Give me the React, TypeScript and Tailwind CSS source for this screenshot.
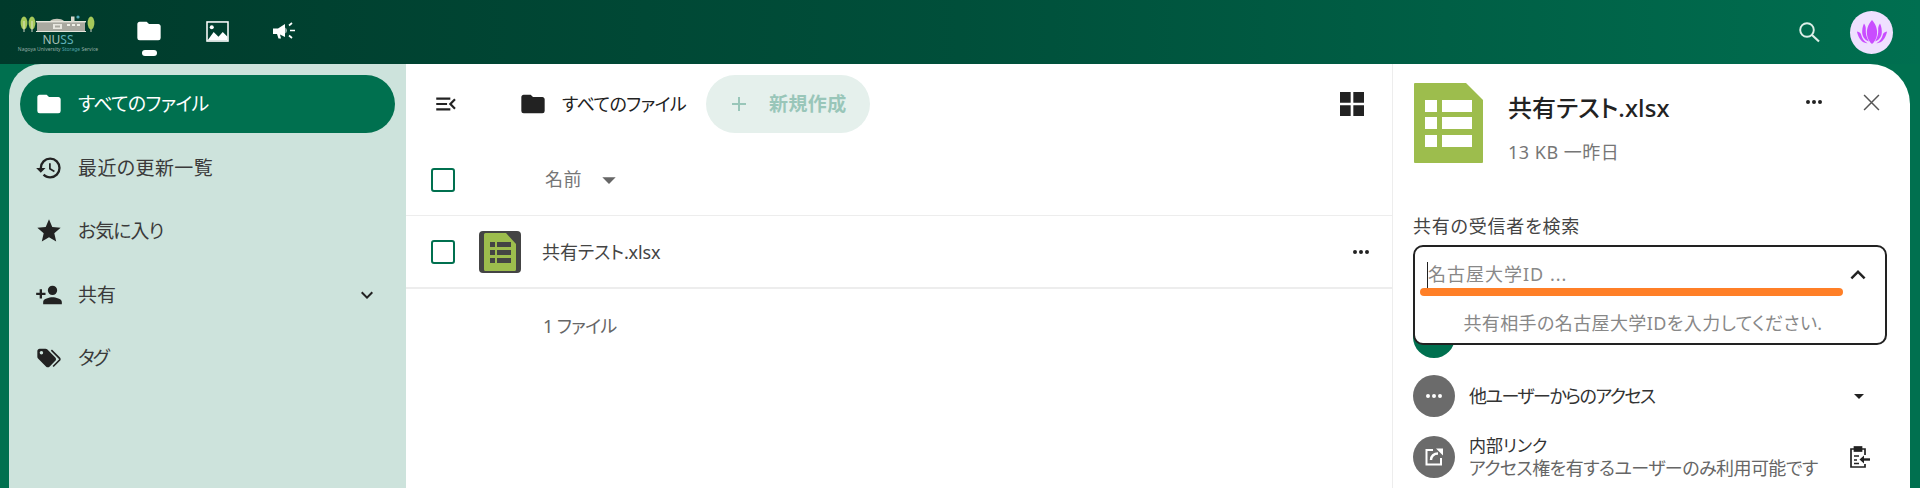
const jp = "font-['Noto_Sans','Noto_Sans_CJK_JP',sans-serif] [font-feature-settings:'palt']";

function Mdi({ d, className }: { d: string; className?: string }) {
  return (
    <svg viewBox="0 0 24 24" fill="currentColor" className={className}>
      <path d={d} />
    </svg>
  );
}

const folderPath = 'M10,4H4C2.89,4 2,4.89 2,6V18A2,2 0 0,0 4,20H20A2,2 0 0,0 22,18V8C22,6.89 21.1,6 20,6H12L10,4Z';
const dotsPath = 'M16,12A2,2 0 0,1 18,10A2,2 0 0,1 20,12A2,2 0 0,1 18,14A2,2 0 0,1 16,12M10,12A2,2 0 0,1 12,10A2,2 0 0,1 14,12A2,2 0 0,1 12,14A2,2 0 0,1 10,12M4,12A2,2 0 0,1 6,10A2,2 0 0,1 8,12A2,2 0 0,1 6,14A2,2 0 0,1 4,12Z';
const chevronDown = 'M7.41,8.58L12,13.17L16.59,8.58L18,10L12,16L6,10L7.41,8.58Z';
const chevronUp = 'M7.41,15.41L12,10.83L16.59,15.41L18,14L12,8L6,14L7.41,15.41Z';
const menuDown = 'M7,10L12,15L17,10H7Z';

const navItems = [
  {
    label: '最近の更新一覧',
    track: 'tracking-[0.4px]',
    d: 'M13.5,8H12V13L16.28,15.54L17,14.33L13.5,12.25V8M13,3A9,9 0 0,0 4,12H1L4.96,16.03L9,12H6A7,7 0 0,1 13,5A7,7 0 0,1 20,12A7,7 0 0,1 13,19C11.07,19 9.32,18.21 8.06,16.94L6.64,18.36C8.27,20 10.5,21 13,21A9,9 0 0,0 22,12A9,9 0 0,0 13,3',
  },
  {
    label: 'お気に入り',
    track: 'tracking-[-1px]',
    d: 'M12,17.27L18.18,21L16.54,13.97L22,9.24L14.81,8.62L12,2L9.19,8.62L2,9.24L7.45,13.97L5.82,21L12,17.27Z',
  },
  {
    label: '共有',
    track: 'tracking-[0px]',
    chevron: true,
    d: 'M15,14C12.33,14 7,15.33 7,18V20H23V18C23,15.33 17.67,14 15,14M6,10V7H4V10H1V12H4V15H6V12H9V10M15,12A4,4 0 0,0 19,8A4,4 0 0,0 15,4A4,4 0 0,0 11,8A4,4 0 0,0 15,12Z',
  },
  {
    label: 'タグ',
    track: 'tracking-[-2px]',
    d: 'M5.5,9A1.5,1.5 0 0,0 7,7.5A1.5,1.5 0 0,0 5.5,6A1.5,1.5 0 0,0 4,7.5A1.5,1.5 0 0,0 5.5,9M17.41,11.58C17.77,11.94 18,12.44 18,13C18,13.55 17.78,14.05 17.41,14.41L12.41,19.41C12.05,19.77 11.55,20 11,20C10.45,20 9.95,19.78 9.58,19.41L2.59,12.42C2.22,12.05 2,11.55 2,11V6C2,4.89 2.89,4 4,4H9C9.55,4 10.05,4.22 10.41,4.58L17.41,11.58M13.54,5.71L14.54,4.71L21.41,11.58C21.78,11.94 22,12.45 22,13C22,13.55 21.78,14.05 21.42,14.41L16.04,19.79L15.04,18.79L20.75,13L13.54,5.71Z',
  },
];

function Logo() {
  return (
    <div className="flex w-[84px] flex-col items-center">
      <svg viewBox="0 0 76 18" className="h-[18px] w-[76px]">
        <ellipse cx="4" cy="8" rx="3.4" ry="6.5" fill="#a5c95a" />
        <ellipse cx="12" cy="8" rx="3.4" ry="6.5" fill="#a5c95a" />
        <path d="M4 6V17M12 6V17M71 6V17" stroke="#e8e8d8" strokeWidth="0.9" />
        <ellipse cx="71" cy="8" rx="3.4" ry="6.5" fill="#a5c95a" />
        <rect x="17" y="7" width="48" height="9" fill="#a9a9a0" />
        <rect x="16" y="6" width="50" height="1.4" fill="#e6e6dc" />
        <rect x="16" y="16" width="50" height="1" fill="#e6e6dc" />
        <path d="M30 6C33 3 41 3 44 6Z" fill="#c8c8bc" />
        <rect x="33" y="9" width="9" height="5" fill="#e8e8e0" />
        <rect x="35" y="10.5" width="5" height="2" fill="#a9a9a0" />
        <rect x="47" y="9" width="3" height="2" fill="#f0f0e8" />
        <rect x="52" y="9" width="3" height="2" fill="#f0f0e8" />
        <rect x="57" y="9" width="3" height="2" fill="#f0f0e8" />
        <rect x="51" y="1.5" width="3.5" height="5" fill="#d8d8cc" />
        <circle cx="58" cy="2" r="1.6" fill="#4fa8b8" />
      </svg>
      <div className="mt-[1px] font-['Noto_Sans',sans-serif] text-[12px] leading-[12px] text-[#a8c0b8]">
        NU<span className="text-[#5fb0b8]">SS</span>
      </div>
      <div className="font-['Noto_Sans',sans-serif] text-[5px] leading-[7px] whitespace-nowrap text-[#94aca4]">
        Nagoya University <span className="text-[#4fa0a8]">Storage</span> Service
      </div>
    </div>
  );
}

function TopBar() {
  return (
    <header className="flex h-16 shrink-0 items-center bg-gradient-to-r from-[#003a2b] via-[#004f3a] to-[#006f50] text-white">
      <div className="ml-[16px] mt-[3px]">
        <Logo />
      </div>
      <div className="ml-[35px] flex h-full w-[28px] flex-col items-center pt-[17px]">
        <Mdi d={folderPath} className="h-[28px] w-[28px]" />
        <div className="mt-[5px] h-[6px] w-[15px] rounded-full bg-white" />
      </div>
      <svg viewBox="0 0 24 22" className="ml-[43px] mb-[2px] h-[21px] w-[23px]">
        <rect x="1" y="1" width="22" height="20" fill="none" stroke="white" strokeWidth="1.6" />
        <path d="M1.5 20.5L8 11.5L13 16.5L17.5 11.5L22.5 16.5V20.5Z" fill="white" />
        <circle cx="6" cy="6.5" r="2.1" fill="white" />
      </svg>
      <svg viewBox="0 0 24 20" className="ml-[43px] mb-[2px] h-[20px] w-[24px]">
        <path d="M1 7.5H6L13 3V16L8 13.5L9 17.5H6.5L5 13H1Z" fill="white" />
        <path d="M13.5 6.5C15 8 15 11 13.5 12.5Z" fill="white" />
        <path d="M17 4.5L20 2M18 9.5H23M17 14.5L20 17" stroke="white" strokeWidth="1.7" fill="none" />
      </svg>
      <div className="ml-auto flex items-center">
        <svg viewBox="0 0 22 22" className="mr-[30px] h-[22px] w-[22px] text-[#dcefe8]" fill="none" stroke="currentColor">
          <circle cx="9" cy="9" r="6.8" strokeWidth="1.9" />
          <path d="M14 14L21 20.5" strokeWidth="2.2" />
        </svg>
        <div className="mr-[27px] flex h-[43px] w-[43px] items-center justify-center rounded-full bg-[#efe0ff]">
          <svg viewBox="0 0 36 28" className="h-[25px] w-[32px]" fill="#c94dff">
            <path d="M18 0C22.5 5 24.5 11 23.5 17C23 21 20.5 25 18 27C15.5 25 13 21 12.5 17C11.5 11 13.5 5 18 0Z" />
            <path d="M9 4C11 7 11.2 9 11 11C10.7 15 11.8 20 14.5 24C9.5 22.5 6.5 18 7 12C7.2 9 8 6 9 4Z" />
            <path d="M27 4C25 7 24.8 9 25 11C25.3 15 24.2 20 21.5 24C26.5 22.5 29.5 18 29 12C28.8 9 28 6 27 4Z" />
            <path d="M1 13C4 13.5 5.5 15 6 17C7 21 9.5 24 13 26C7 26.5 3 21 1 13Z" />
            <path d="M35 13C32 13.5 30.5 15 30 17C29 21 26.5 24 23 26C29 26.5 33 21 35 13Z" />
          </svg>
        </div>
      </div>
    </header>
  );
}

function Sidebar() {
  return (
    <aside className={`${jp} flex w-[397px] shrink-0 flex-col gap-[5.5px] rounded-tl-[32px] bg-[#cde3dc] px-[11px] pt-[11px]`}>
      <div className="flex h-[58px] items-center rounded-full bg-[#00704f] pl-[15px] text-white">
        <Mdi d={folderPath} className="h-[28px] w-[28px]" />
        <span className="ml-[15px] text-[19px] tracking-[-0.7px]">すべてのファイル</span>
      </div>
      {navItems.map((item) => (
        <div key={item.label} className="flex h-[58px] items-center pl-[15px] text-[#222]">
          <Mdi d={item.d} className="h-[28px] w-[28px]" />
          <span className={`ml-[15px] mt-[1px] text-[19px] ${item.track} text-[#3a3a3a]`}>{item.label}</span>
          {item.chevron && <Mdi d={chevronDown} className="ml-auto mr-[16px] h-[24px] w-[24px]" />}
        </div>
      ))}
    </aside>
  );
}

function Checkbox() {
  return <div className="h-[24px] w-[24px] rounded-[3px] border-[2.5px] border-[#00704f]" />;
}

function SheetSmall() {
  return (
    <div className="flex h-[42px] w-[42px] items-center justify-center rounded-[4px] bg-[#444]">
      <svg viewBox="0 0 32 38" className="h-[38px] w-[32px]">
        <path d="M0 1.5A1.5 1.5 0 0 1 1.5 0H22L32 11V36.5A1.5 1.5 0 0 1 30.5 38H1.5A1.5 1.5 0 0 1 0 36.5Z" fill="#9dbd4d" />
        <g fill="#444">
          <rect x="6" y="9" width="5" height="5" />
          <rect x="13" y="9" width="14" height="5" />
          <rect x="6" y="17" width="5" height="5" />
          <rect x="13" y="17" width="14" height="5" />
          <rect x="6" y="25" width="5" height="5" />
          <rect x="13" y="25" width="14" height="5" />
        </g>
      </svg>
    </div>
  );
}

function FileList() {
  return (
    <main className={`${jp} min-w-0 flex-1 bg-white`}>
      <div className="flex h-[80px] items-center">
        <Mdi d="M21,15.61L19.59,17L14.58,12L19.59,7L21,8.39L17.44,12L21,15.61M3,6H16V8H3V6M3,13V11H13V13H3M3,18V16H16V18H3Z" className="ml-[27px] h-[26px] w-[26px] text-[#222]" />
        <Mdi d={folderPath} className="ml-[60px] h-[28px] w-[28px] text-[#222]" />
        <span className="w-[141px] shrink-0 pl-[15px] text-[18px] tracking-[-0.6px] text-[#222]">すべてのファイル</span>
        <div className="ml-[18px] flex h-[58px] w-[164px] items-center rounded-full bg-[#e5f0ec] pl-[21px] text-[#99c6b9]">
          <Mdi d="M19,13H13V19H11V13H5V11H11V5H13V11H19V13Z" className="h-[24px] w-[24px]" />
          <span className="ml-[18px] text-[19px] font-bold tracking-[0.4px]">新規作成</span>
        </div>
        <Mdi d="M3,11H11V3H3M3,21H11V13H3M13,21H21V13H13M13,3V11H21V3" className="ml-auto mr-[24px] h-[32px] w-[32px] text-[#222]" />
      </div>
      <div className="flex h-[72px] items-center border-b border-[#ededed]">
        <div className="ml-[25px]"><Checkbox /></div>
        <span className="ml-[90px] text-[18px] tracking-[0.5px] text-[#767676]">名前</span>
        <Mdi d={menuDown} className="ml-[11px] h-[32px] w-[32px] text-[#666]" />
      </div>
      <div className="flex h-[73px] items-center border-b-2 border-[#ededed]">
        <div className="ml-[25px]"><Checkbox /></div>
        <div className="ml-[24px]"><SheetSmall /></div>
        <span className="ml-[21px] mt-[2px] text-[18px] tracking-[-0.1px] text-[#444]">共有テスト.xlsx</span>
        <Mdi d={dotsPath} className="ml-auto mr-[19px] h-[24px] w-[24px] text-[#222]" />
      </div>
      <div className="ml-[137px] mt-[24px] text-[18px] tracking-[-0.6px] text-[#666]">1 ファイル</div>
    </main>
  );
}

function DetailRow({ color, icon, children, right }: { color: string; icon?: React.ReactNode; children?: React.ReactNode; right?: React.ReactNode }) {
  return (
    <div className="flex items-center">
      <div className={`flex h-[42px] w-[42px] shrink-0 items-center justify-center rounded-full ${color} text-white`}>{icon}</div>
      <div className="ml-[14px] min-w-0 flex-1">{children}</div>
      {right}
    </div>
  );
}

function Details() {
  return (
    <section className={`${jp} relative flex w-[518px] shrink-0 flex-col rounded-tr-[40px] border-l border-[#ededed] bg-white pl-[20px] pr-[22px] text-[#222]`}>
      <div className="flex pt-[19px]">
        <svg viewBox="0 0 69 80" className="ml-[1px] h-[80px] w-[69px] shrink-0">
          <path d="M0 1A1 1 0 0 1 1 0H52L69 17V79A1 1 0 0 1 68 80H1A1 1 0 0 1 0 79Z" fill="#9dbd4d" />
          <g fill="white">
            <rect x="11" y="17" width="12" height="12" />
            <rect x="28" y="17" width="30" height="12" />
            <rect x="11" y="34" width="12" height="12" />
            <rect x="28" y="34" width="30" height="12" />
            <rect x="11" y="52" width="12" height="12" />
            <rect x="28" y="52" width="30" height="12" />
          </g>
        </svg>
        <div className="ml-[25px] flex-1">
          <div className="mt-[9px] text-[24px] leading-[32px] font-medium tracking-[0.1px]">共有テスト.xlsx</div>
          <div className="mt-[16px] text-[18px] leading-[24px] tracking-[0.5px] text-[#767676]">13 KB 一昨日</div>
        </div>
        <Mdi d={dotsPath} className="mr-[37px] mt-[7px] h-[24px] w-[24px] text-[#222]" />
        <svg viewBox="0 0 16 16" className="mr-[8px] mt-[11px] h-[17px] w-[17px] text-[#555]" fill="none" stroke="currentColor" strokeWidth="1.4">
          <path d="M1 1L15 15M15 1L1 15" />
        </svg>
      </div>
      <div className="mt-[50px] text-[18px] leading-[24px] tracking-[0.8px] text-[#444]">共有の受信者を検索</div>
      <div className="mt-[78px] flex flex-col gap-[17px]">
        <DetailRow color="bg-[#00704f]" />
        <DetailRow
          color="bg-[#6b6b6b]"
          icon={<Mdi d={dotsPath} className="h-[24px] w-[24px]" />}
          right={<Mdi d={menuDown} className="mr-[17px] h-[24px] w-[24px] text-[#222]" />}
        >
          <span className="text-[18px] tracking-[-1.5px] text-[#333]">他ユーザーからのアクセス</span>
        </DetailRow>
        <DetailRow
          color="bg-[#6b6b6b]"
          icon={
            <svg viewBox="0 0 24 24" className="h-[24px] w-[24px]" fill="none" stroke="white" strokeWidth="2">
              <path d="M11 5H4.5V19.5H19V13" />
              <path d="M9 15C9 11 12 8.5 16 8.5" strokeWidth="2.4" />
              <path d="M14 3.5H21V10.5Z" fill="white" stroke="none" />
            </svg>
          }
          right={
            <svg viewBox="0 0 24 24" className="mr-[17px] h-[24px] w-[24px] text-[#222]" fill="none" stroke="currentColor" strokeWidth="1.7">
              <path d="M7.5 4H4V22H18V19" />
              <path d="M14.5 4H18V10" />
              <rect x="7.5" y="2" width="7" height="4" fill="currentColor" />
              <path d="M7 11H12M7 15H10M7 18.5H12" strokeWidth="1.4" />
              <path d="M23 14.5H14" strokeWidth="2.4" />
              <path d="M17 10.5L12.5 14.5L17 18.5Z" fill="currentColor" stroke="none" />
            </svg>
          }
        >
          <div className="text-[17px] leading-[23px] text-[#333]">内部リンク</div>
          <div className="text-[18px] leading-[23px] tracking-[-0.55px] whitespace-nowrap text-[#666]">アクセス権を有するユーザーのみ利用可能です</div>
        </DetailRow>
      </div>

      {/* 受信者検索のドロップダウン */}
      <div className="absolute left-[20px] top-[181px] h-[100px] w-[474px] rounded-[10px] border-2 border-[#222] bg-white">
        <div className="flex h-[55px] items-center pl-[12px] pr-[12px]">
          <div className="h-[26px] w-px bg-[#222]" />
          <span className="text-[18px] tracking-[1px] text-[#888]">名古屋大学ID ...</span>
          <Mdi d={chevronUp} className="ml-auto h-[30px] w-[30px] text-[#222]" />
        </div>
        <div className="mt-[6px] pr-[14px] text-center text-[18px] leading-[30px] tracking-[0.4px] text-[#888]">共有相手の名古屋大学IDを入力してください.</div>
        <div className="absolute left-[5px] top-[41px] h-[8px] w-[423px] rounded-full bg-[#ff7f27]" />
      </div>
    </section>
  );
}

export default function App() {
  return (
    <div className="flex h-[488px] flex-col overflow-hidden bg-[#00704f]">
      <TopBar />
      <div className="flex min-h-0 flex-1 pl-[9px] pr-[10px]">
        <Sidebar />
        <FileList />
        <Details />
      </div>
    </div>
  );
}
